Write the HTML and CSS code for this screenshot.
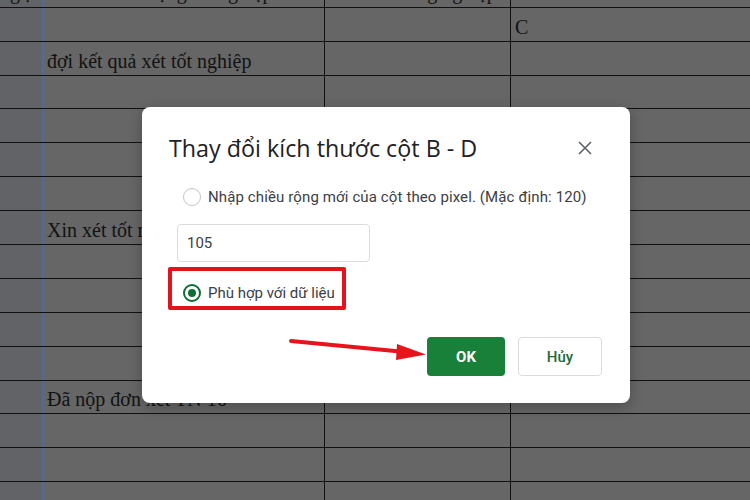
FILE: index.html
```html
<!DOCTYPE html>
<html lang="vi">
<head>
  <meta charset="UTF-8" />
  <title>Thay đổi kích thước cột</title>
  <link rel="stylesheet" href="styles.css">
</head>
<body>
  <div class="sheet">
    <div class="row first">
      <div class="cell a"><span class="cut">ng ị</span></div>
      <div class="cell b"><span class="cut">Tình trạng tốt nghiệp</span></div>
      <div class="cell c"><span class="cut">Tổng nghiệp</span></div>
      <div class="cell d"></div>
    </div>
    <div class="row"><div class="cell a"></div><div class="cell b"></div><div class="cell c"></div><div class="cell d">C</div></div>
    <div class="row"><div class="cell a"></div><div class="cell b">đợi kết quả xét tốt nghiệp</div><div class="cell c"></div><div class="cell d"></div></div>
    <div class="row short"><div class="cell a"></div><div class="cell b"></div><div class="cell c"></div><div class="cell d"></div></div>
    <div class="row"><div class="cell a"></div><div class="cell b"></div><div class="cell c"></div><div class="cell d"></div></div>
    <div class="row"><div class="cell a"></div><div class="cell b"></div><div class="cell c"></div><div class="cell d"></div></div>
    <div class="row"><div class="cell a"></div><div class="cell b"></div><div class="cell c"></div><div class="cell d"></div></div>
    <div class="row"><div class="cell a"></div><div class="cell b">Xin xét tốt nghiệp</div><div class="cell c"></div><div class="cell d"></div></div>
    <div class="row"><div class="cell a"></div><div class="cell b"></div><div class="cell c"></div><div class="cell d"></div></div>
    <div class="row"><div class="cell a"></div><div class="cell b"></div><div class="cell c"></div><div class="cell d"></div></div>
    <div class="row"><div class="cell a"></div><div class="cell b"></div><div class="cell c"></div><div class="cell d"></div></div>
    <div class="row"><div class="cell a"></div><div class="cell b"></div><div class="cell c"></div><div class="cell d"></div></div>
    <div class="row short"><div class="cell a"></div><div class="cell b">Đã nộp đơn xét TN 16</div><div class="cell c"></div><div class="cell d"></div></div>
    <div class="row"><div class="cell a"></div><div class="cell b"></div><div class="cell c"></div><div class="cell d"></div></div>
    <div class="row"><div class="cell a"></div><div class="cell b"></div><div class="cell c"></div><div class="cell d"></div></div>
    <div class="row"><div class="cell a"></div><div class="cell b"></div><div class="cell c"></div><div class="cell d"></div></div>
  </div>

  <!-- Resize columns dialog -->
  <div class="dialog">
    <div class="dialog-title">
      <h2>Thay đổi kích thước cột B - D</h2>
      <span class="close">
        <svg width="14" height="14" viewBox="0 0 14 14"><path d="M1 1L13 13M13 1L1 13" stroke="#5f6368" stroke-width="1.6" fill="none"/></svg>
      </span>
    </div>
    <div class="opt opt-first">
      <span class="radio"></span>
      <span class="label-wide">Nhập chiều rộng mới của cột theo pixel. (Mặc định: 120)</span>
    </div>
    <input class="width-input" type="text" value="105" />
    <div class="marked">
      <div class="opt">
        <span class="radio checked"></span>
        <span>Phù hợp với dữ liệu</span>
      </div>
    </div>
    <div class="actions">
      <button class="btn ok">OK</button>
      <button class="btn cancel">Hủy</button>
    </div>
  </div>

  <svg class="arrow" width="750" height="500" viewBox="0 0 750 500">
    <line x1="291" y1="341" x2="400" y2="351.5" stroke="#e8141c" stroke-width="4" stroke-linecap="round"/>
    <polygon points="426,354.5 397,344 396,360" fill="#e8141c"/>
  </svg>
</body>
</html>
```

FILE: styles.css
```css
body {
  margin: 0;
  width: 750px;
  height: 500px;
  overflow: hidden;
  position: relative;
  background: #666;
  font-family: "Liberation Serif", serif;
}
.row {
  display: flex;
  height: 34px;
  box-sizing: border-box;
  border-bottom: 1px solid #111;
}
.row.first {
  height: 8px;
  overflow: hidden;
}
.row.short {
  height: 33px;
}
.cell {
  box-sizing: border-box;
  display: flex;
  align-items: flex-end;
  padding: 0 4px 3px;
  border-right: 1px solid #111;
  font-size: 20px;
  line-height: 22px;
  color: #121212;
  white-space: nowrap;
}
.cell.a {
  width: 43px;
  background: #616366;
  border-right-color: #4f6f9f;
}
.cell.b {
  width: 282px;
}
.cell.c {
  width: 186px;
}
.cell.d {
  flex: 1;
  border-right: none;
}
.row.first .cell {
  align-items: flex-start;
  padding: 0;
  overflow: hidden;
}
.cut {
  margin-top: -19px;
  padding-left: 60px;
}
.cell.a .cut {
  padding-left: 0;
}
.cell.c .cut {
  padding-left: 70px;
}

.dialog {
  position: absolute;
  left: 142px;
  top: 107px;
  width: 488px;
  height: 296px;
  box-sizing: border-box;
  padding: 27px 28px 27px 26px;
  background: #fff;
  border-radius: 8px;
  box-shadow: 0 4px 14px rgba(0,0,0,0.25);
  font-family: Roboto, "Noto Sans", sans-serif;
}
.dialog-title {
  display: flex;
  justify-content: space-between;
  align-items: center;
  height: 28px;
}
.dialog-title h2 {
  margin: 0 0 0 1px;
  font-family: "Open Sans", Roboto, sans-serif;
  font-size: 23.3px;
  line-height: 28px;
  font-weight: 400;
  color: #202124;
}
.close {
  width: 24px;
  height: 24px;
  margin-right: 5px;
  display: flex;
  align-items: center;
  justify-content: center;
}
.opt {
  display: flex;
  align-items: center;
  gap: 7px;
  height: 20px;
  font-size: 15px;
  color: #3c4043;
  white-space: nowrap;
}
.label-wide {
  letter-spacing: 0.12px;
}
.opt-first {
  margin-top: 25px;
  padding-left: 15px;
}
.radio {
  width: 18px;
  height: 18px;
  box-sizing: border-box;
  border: 1.5px solid #c4c7c5;
  border-radius: 50%;
  display: flex;
  align-items: center;
  justify-content: center;
}
.radio.checked {
  border: 2px solid #0f6e33;
}
.radio.checked::after {
  content: "";
  width: 8px;
  height: 8px;
  border-radius: 50%;
  background: #0f6e33;
}
.width-input {
  display: block;
  margin: 17px 0 0 9px;
  width: 193px;
  height: 38px;
  box-sizing: border-box;
  padding: 0 9px;
  border: 1px solid #dadce0;
  border-radius: 4px;
  font-family: Roboto, sans-serif;
  font-size: 15px;
  color: #3c4043;
  outline: none;
}
.marked {
  margin-top: 5px;
  width: 178px;
  height: 43px;
  box-sizing: border-box;
  border: 4px solid #e3121b;
  border-radius: 2px;
  padding: 12px 0 0 11px;
}
.actions {
  display: flex;
  justify-content: flex-end;
  gap: 13px;
  margin-top: 27px;
}
.btn {
  height: 39px;
  border-radius: 4px;
  font-family: Roboto, sans-serif;
  font-size: 15px;
  cursor: pointer;
}
.btn.ok {
  width: 78px;
  background: #188038;
  color: #fff;
  border: none;
  font-weight: 700;
}
.btn.cancel {
  width: 84px;
  background: #fff;
  color: #1e6b3a;
  border: 1px solid #dadce0;
  font-weight: 500;
}
.arrow {
  position: absolute;
  left: 0;
  top: 0;
  pointer-events: none;
}
```
